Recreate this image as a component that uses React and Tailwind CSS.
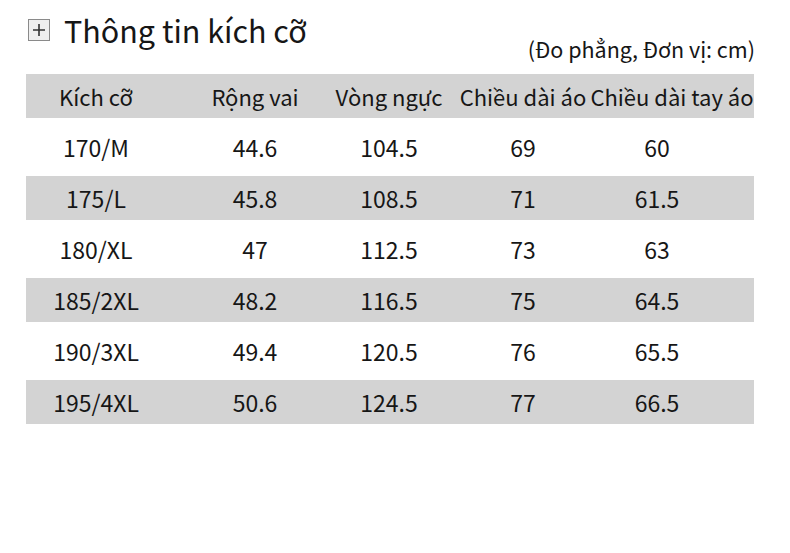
import React from "react";

const rows = [
  ["170/M", "44.6", "104.5", "69", "60"],
  ["175/L", "45.8", "108.5", "71", "61.5"],
  ["180/XL", "47", "112.5", "73", "63"],
  ["185/2XL", "48.2", "116.5", "75", "64.5"],
  ["190/3XL", "49.4", "120.5", "76", "65.5"],
  ["195/4XL", "50.6", "124.5", "77", "66.5"],
];

const headers = ["Kích cỡ", "Rộng vai", "Vòng ngực", "Chiều dài áo", "Chiều dài tay áo"];

const Cell = ({ children }) => (
  <div className="flex justify-center whitespace-nowrap">{children}</div>
);

export default function App() {
  return (
    <div
      className="w-[790px] h-[553px] bg-white text-[#161616] overflow-hidden"
      style={{ fontFamily: '"Noto Sans CJK SC", "Noto Sans", sans-serif' }}
    >
      <div className="flex items-center pl-[28px] pt-[11px] h-[38px] box-content">
        <div className="w-[22px] h-[22px] border border-[#8a8a8a] bg-[#efefef] flex items-center justify-center">
          <svg width="14" height="14" viewBox="0 0 14 14">
            <path d="M7 1v12M1 7h12" stroke="#333" strokeWidth="1.6" />
          </svg>
        </div>
        <div className="ml-[14px] text-[30.5px] leading-none">Thông tin kích cỡ</div>
      </div>
      <div className="flex justify-end pr-[35px] h-[24px] mt-[-12px] text-[21.5px] leading-[24px]">
        (Đo phẳng, Đơn vị: cm)
      </div>
      <div className="ml-[26px] w-[728px] mt-[13px]">
        <div className="grid grid-cols-[140px_178px_90px_178px_120px_22px] items-center h-[44px] bg-[#d3d3d3] text-[22px]">
          {headers.map((h) => (
            <Cell key={h}>{h}</Cell>
          ))}
        </div>
        {rows.map((r, i) => (
          <div
            key={r[0]}
            className={
              i % 2 === 0
                ? "grid grid-cols-[140px_178px_90px_178px_90px_52px] items-center h-[58px] text-[23px]"
                : "grid grid-cols-[140px_178px_90px_178px_90px_52px] items-center h-[44px] bg-[#d3d3d3] text-[23px]"
            }
          >
            {r.map((v, j) => (
              <Cell key={j}>{v}</Cell>
            ))}
          </div>
        ))}
      </div>
    </div>
  );
}
